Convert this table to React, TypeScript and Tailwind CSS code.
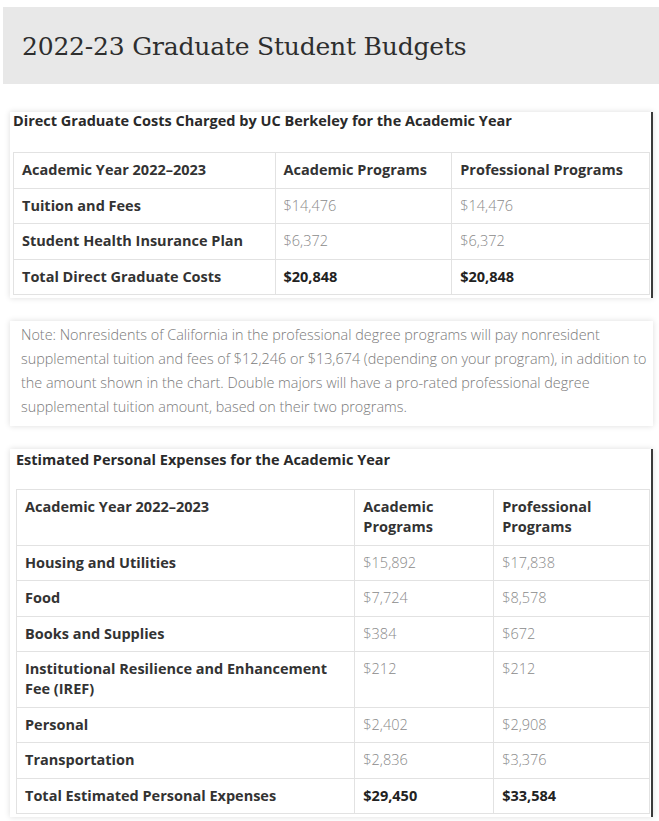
import React from 'react';

type Row = {
  label: string;
  academic: string;
  professional: string;
  total?: boolean;
};

const DIRECT_ROWS: Row[] = [
  { label: 'Tuition and Fees', academic: '$14,476', professional: '$14,476' },
  { label: 'Student Health Insurance Plan', academic: '$6,372', professional: '$6,372' },
  { label: 'Total Direct Graduate Costs', academic: '$20,848', professional: '$20,848', total: true }
];

const PERSONAL_ROWS: Row[] = [
  { label: 'Housing and Utilities', academic: '$15,892', professional: '$17,838' },
  { label: 'Food', academic: '$7,724', professional: '$8,578' },
  { label: 'Books and Supplies', academic: '$384', professional: '$672' },
  { label: 'Institutional Resilience and Enhancement Fee (IREF)', academic: '$212', professional: '$212' },
  { label: 'Personal', academic: '$2,402', professional: '$2,908' },
  { label: 'Transportation', academic: '$2,836', professional: '$3,376' },
  { label: 'Total Estimated Personal Expenses', academic: '$29,450', professional: '$33,584', total: true }
];

const cell = 'border border-[#e2e2e2] px-2 py-[7.25px] align-top text-left';

type BudgetTableProps = {
  caption: string;
  rows: Row[];
  cols: [string, string, string];
  inset: string;
  top: string;
};

const BudgetTable = ({ caption, rows, cols, inset, top }: BudgetTableProps) => (
  <div className="bg-white border-r-2 border-[#3a3a3a] shadow-[0_0_6px_rgba(0,0,0,0.14)] pb-[3px]">
    <div className={`${inset} ${top} h-[40px] text-[14.5px] leading-[17px] font-bold text-[#2a2a2a]`}>{caption}</div>
    <div className={`${inset} pr-[1px]`}>
      <table className="w-full border-collapse text-[14.5px] leading-[20px]">
        <colgroup>
          <col className={cols[0]} />
          <col className={cols[1]} />
          <col className={cols[2]} />
        </colgroup>
        <thead>
          <tr>
            <th className={`${cell} font-bold text-[#333]`}>Academic Year 2022–2023</th>
            <th className={`${cell} font-bold text-[#333]`}>Academic Programs</th>
            <th className={`${cell} font-bold text-[#333]`}>Professional Programs</th>
          </tr>
        </thead>
        <tbody>
          {rows.map((row) => (
            <tr key={row.label}>
              <td className={`${cell} font-bold text-[#333]`}>{row.label}</td>
              <td className={`${cell} ${row.total ? 'font-bold text-[#222]' : 'font-light text-[#8a8a8a]'}`}>{row.academic}</td>
              <td className={`${cell} ${row.total ? 'font-bold text-[#222]' : 'font-light text-[#8a8a8a]'}`}>{row.professional}</td>
            </tr>
          ))}
        </tbody>
      </table>
    </div>
  </div>
);

const App = () => {
  return (
    <div className="w-[659px] min-h-[821px] bg-white pt-[7px] pb-2 font-['Open_Sans',sans-serif]">
      <div className="ml-[3px] h-[77px] bg-[#e8e8e8] pl-[19px] pt-[3px] flex items-center">
        <h1 className="font-['DejaVu_Serif',serif] text-[25px] text-[#2e2e2e] tracking-[-0.2px]">
          2022-23 Graduate Student Budgets
        </h1>
      </div>

      <div className="ml-[10px] mr-[6px] mt-[28px] flex flex-col gap-[23px]">
        <BudgetTable
          caption="Direct Graduate Costs Charged by UC Berkeley for the Academic Year"
          rows={DIRECT_ROWS}
          cols={['w-[262px]', 'w-[177px]', 'w-[198px]']}
          inset="pl-[3px]"
          top="pt-0"
        />

        <div className="bg-white shadow-[0_0_6px_rgba(0,0,0,0.14)] pl-[11px] pr-1 pt-[2px] pb-[7px] text-[14.4px] leading-[24px] font-light text-[#7a7a7a]">
          Note: Nonresidents of California in the professional degree programs will pay nonresident supplemental tuition and
          fees of $12,246 or $13,674 (depending on your program), in addition to the amount shown in the chart. Double majors
          will have a pro-rated professional degree supplemental tuition amount, based on their two programs.
        </div>

        <BudgetTable
          caption="Estimated Personal Expenses for the Academic Year"
          rows={PERSONAL_ROWS}
          cols={['w-[339px]', 'w-[139px]', 'w-[156px]']}
          inset="pl-[6px]"
          top="pt-[2px]"
        />
      </div>
    </div>
  );
};

export default App;
